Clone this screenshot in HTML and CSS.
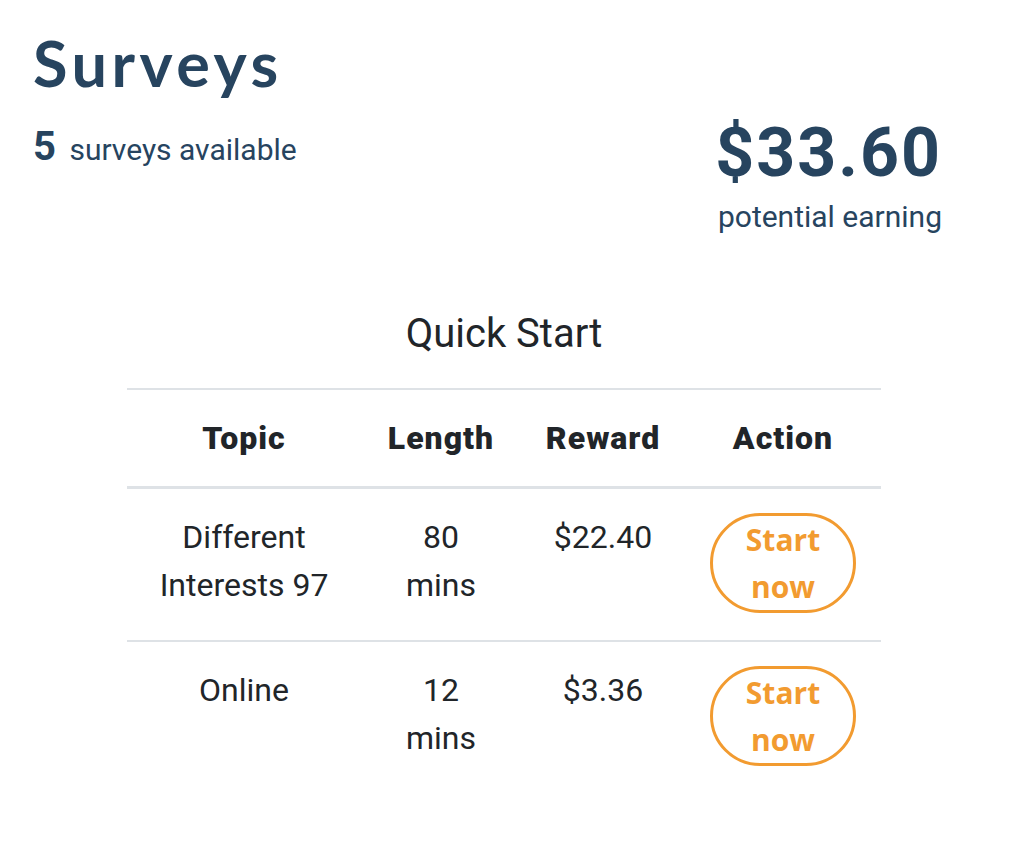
FILE: index.html
```html
<!DOCTYPE html>
<html lang="en">
<head>
<meta charset="utf-8">
<title>Surveys</title>
<link rel="stylesheet" href="styles.css">
</head>
<body>
<div class="page">
  <header class="header">
    <div class="intro">
      <h1 class="title">Surveys</h1>
      <p class="count"><span class="count-num">5</span> surveys available</p>
    </div>
    <div class="earning">
      <div class="earning-amount">$33.60</div>
      <div class="earning-label">potential earning</div>
    </div>
  </header>

  <h2 class="quick-title">Quick Start</h2>

  <table class="survey-table">
    <colgroup>
      <col class="col-topic">
      <col class="col-length">
      <col class="col-reward">
      <col class="col-action">
    </colgroup>
    <thead>
      <tr>
        <th>Topic</th>
        <th>Length</th>
        <th>Reward</th>
        <th>Action</th>
      </tr>
    </thead>
    <tbody>
      <tr>
        <td>Different Interests 97</td>
        <td>80 mins</td>
        <td>$22.40</td>
        <td><a class="start-btn" href="#">Start now</a></td>
      </tr>
      <tr>
        <td>Online</td>
        <td>12 mins</td>
        <td>$3.36</td>
        <td><a class="start-btn" href="#">Start now</a></td>
      </tr>
    </tbody>
  </table>
</div>
</body>
</html>
```

FILE: styles.css
```css
html, body {
  margin: 0;
  padding: 0;
  background: #ffffff;
}

body {
  font-family: Roboto, "Liberation Sans", sans-serif;
  color: #212529;
}

.page {
  padding: 26px 45px 40px 33px;
}

.header {
  display: flex;
  justify-content: space-between;
  align-items: flex-start;
}

.title {
  margin: 0;
  font-family: Lato, "Open Sans", sans-serif;
  font-weight: 700;
  font-size: 63px;
  line-height: 74px;
  letter-spacing: 4.5px;
  color: #27445f;
}

.count {
  margin: 27px 0 0;
  font-size: 30px;
  line-height: 40px;
  color: #27445f;
}

.count-num {
  font-weight: 700;
  font-size: 40px;
  margin-right: 6px;
}

.earning {
  text-align: right;
  padding-right: 33px;
  padding-top: 92px;
}

.earning-amount {
  font-weight: 700;
  font-size: 68px;
  line-height: 70px;
  letter-spacing: 2px;
  color: #27445f;
}

.earning-label {
  font-size: 30px;
  line-height: 40px;
  margin-top: 9px;
  color: #27445f;
}

.quick-title {
  margin: 69px 0 0;
  text-align: center;
  font-weight: 400;
  font-size: 40px;
  line-height: 56px;
  color: #212529;
}

.survey-table {
  width: 754px;
  margin: 26px auto 0;
  border-collapse: collapse;
  font-size: 32px;
  line-height: 48px;
}

.col-topic { width: 234px; }
.col-length { width: 160px; }
.col-reward { width: 164px; }
.col-action { width: 196px; }

.survey-table th,
.survey-table td {
  text-align: center;
  vertical-align: top;
  padding: 24px 24px 27px;
}

.survey-table thead th {
  font-weight: 900;
  font-size: 32px;
  letter-spacing: 1px;
  border-top: 2px solid #dee2e6;
  border-bottom: 3px solid #dee2e6;
  padding: 24px 8px 24px;
}

.survey-table tbody tr + tr td {
  border-top: 2px solid #dee2e6;
}

.start-btn {
  display: inline-block;
  width: 140px;
  border: 3px solid #f29b30;
  border-radius: 50px;
  font-family: "Open Sans", Lato, sans-serif;
  font-weight: 700;
  font-size: 30px;
  line-height: 47px;
  color: #f29b30;
  text-decoration: none;
}
```
